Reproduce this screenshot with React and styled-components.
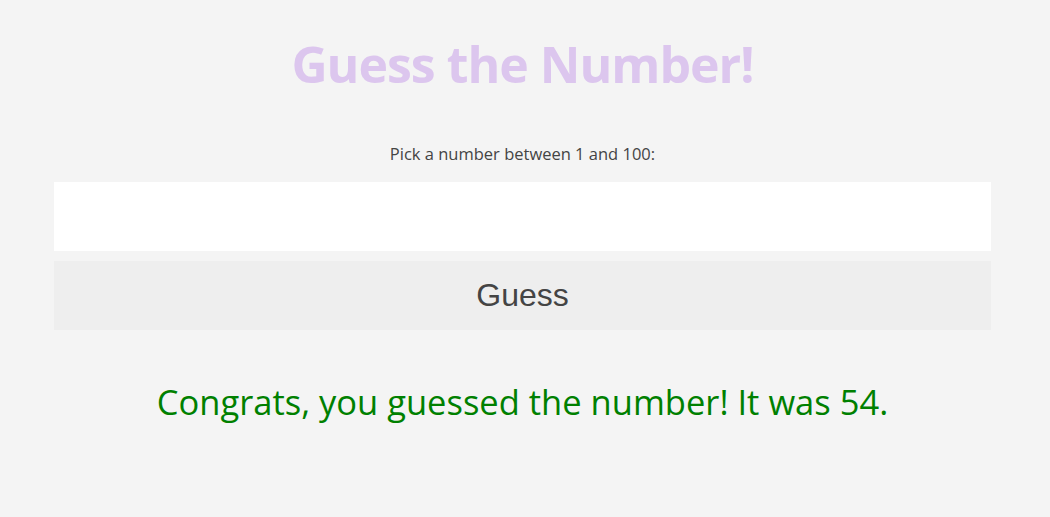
import React, { useState } from 'react';
import styled, { createGlobalStyle } from 'styled-components';

const GlobalStyle = createGlobalStyle`
  body {
    margin: 0;
    background: #f4f4f4;
    font-family: 'Open Sans', 'Liberation Sans', sans-serif;
  }
`;

export default function App() {
  const [value, setValue] = useState('');

  return (
    <>
      <GlobalStyle />
      <Page>
        <Title>Guess the Number!</Title>
        <Prompt>Pick a number between 1 and 100:</Prompt>
        <GuessInput
          type="number"
          value={value}
          onChange={(e) => setValue(e.target.value)}
        />
        <GuessButton>Guess</GuessButton>
        <Message>Congrats, you guessed the number! It was 54.</Message>
      </Page>
    </>
  );
}

const Page = styled.div`
  display: flex;
  flex-direction: column;
  align-items: stretch;
  padding: 0 59px 0 54px;
  text-align: center;
`;

const Title = styled.h1`
  margin: 30px 0 0;
  font-size: 50px;
  line-height: 68px;
  font-weight: 700;
  letter-spacing: -1px;
  color: #dcc6ee;
`;

const Prompt = styled.p`
  margin: 45px 0 0;
  font-size: 16.5px;
  line-height: 22px;
  color: #444;
`;

const GuessInput = styled.input`
  box-sizing: border-box;
  margin-top: 17px;
  height: 69px;
  width: 100%;
  border: none;
  outline: none;
  background: #fff;
  font-size: 28px;
  padding: 0 16px;
  text-align: center;
`;

const GuessButton = styled.button`
  box-sizing: border-box;
  margin-top: 10px;
  height: 69px;
  width: 100%;
  border: none;
  background: #eeeeee;
  color: #444;
  font-family: 'Liberation Sans', Arial, sans-serif;
  font-size: 32px;
  cursor: pointer;
`;

const Message = styled.p`
  margin: 50px 0 0;
  font-size: 34.5px;
  line-height: 44px;
  color: #008000;
`;
